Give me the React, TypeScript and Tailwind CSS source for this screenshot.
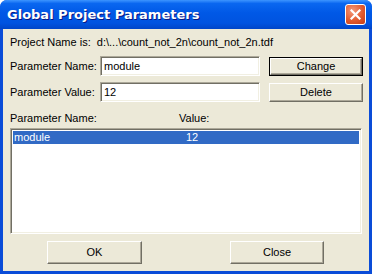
import React from 'react';

const font = { fontFamily: '"Liberation Sans", Arial, sans-serif' };

function Sunken({ className = '', children }: { className?: string; children?: React.ReactNode }) {
  return (
    <div
      className={`border border-t-[#ACA899] border-l-[#ACA899] border-r-white border-b-white shadow-[inset_1px_1px_0_#716F64,inset_-1px_-1px_0_#F1EFE2] bg-white ${className}`}
    >
      {children}
    </div>
  );
}

function Button({ label, isDefault = false, className = '' }: { label: string; isDefault?: boolean; className?: string }) {
  return (
    <div className={`${isDefault ? 'border border-black' : ''} ${className}`}>
      <div className="h-full w-full flex items-center justify-center bg-[#ECE9D8] border border-t-white border-l-white border-r-[#716F64] border-b-[#716F64] shadow-[inset_-1px_-1px_0_#ACA899] text-[11px] text-black">
        {label}
      </div>
    </div>
  );
}

export default function App() {
  return (
    <div className="w-[372px] h-[274px] bg-[#0A4CD8] rounded-t-[7px] flex flex-col overflow-hidden" style={font}>
      {/* 타이틀바 */}
      <div className="h-[29px] shrink-0 flex items-center pl-[7px] pr-[6px] bg-[linear-gradient(180deg,#3D95FF_0%,#0A67F0_12%,#0058E6_45%,#0053E0_80%,#0045C8_100%)]">
        <span
          className="text-white font-bold text-[13px] flex-1 [text-shadow:1px_1px_0_#0A1883]"
          style={{ fontFamily: '"DejaVu Sans", "Liberation Sans", sans-serif' }}
        >
          Global Project Parameters
        </span>
        <div className="w-[21px] h-[21px] rounded-[3px] border border-white bg-[radial-gradient(circle_at_35%_30%,#F49A7C_0%,#E25A2E_55%,#C53B13_100%)] flex items-center justify-center">
          <svg width="11" height="11" viewBox="0 0 11 11">
            <path d="M1.5 1.5 L9.5 9.5 M9.5 1.5 L1.5 9.5" stroke="white" strokeWidth="2.2" strokeLinecap="square" />
          </svg>
        </div>
      </div>

      {/* 본문 */}
      <div className="flex-1 mx-[3px] mb-[3px] bg-[#ECE9D8] pl-[7px] pr-[6px] flex flex-col text-[11px] text-black">
        <div className="mt-[7px] h-[13px] leading-[13px] whitespace-pre">Project Name is:  d:\...\count_not_2n\count_not_2n.tdf</div>

        <div className="mt-[7px] flex items-center h-[20px]">
          <div className="w-[90px]">Parameter Name:</div>
          <Sunken className="w-[160px] h-[20px] flex items-center pl-[3px]">module</Sunken>
          <Button label="Change" isDefault className="ml-[9px] w-[94px] h-[19px]" />
        </div>

        <div className="mt-[6px] flex items-center h-[20px]">
          <div className="w-[90px]">Parameter Value:</div>
          <Sunken className="w-[160px] h-[20px] flex items-center pl-[3px]">12</Sunken>
          <Button label="Delete" className="ml-[9px] w-[94px] h-[19px]" />
        </div>

        <div className="mt-[10px] flex h-[13px] leading-[13px]">
          <div className="w-[169px]">Parameter Name:</div>
          <div>Value:</div>
        </div>

        <Sunken className="mt-[3px] w-[352px] h-[106px] p-[2px]">
          <div className="h-[13px] leading-[13px] flex bg-[#316AC5] text-white">
            <div className="w-[173px] pl-[1px]">module</div>
            <div>12</div>
          </div>
        </Sunken>

        <div className="mt-[7px] flex">
          <Button label="OK" className="ml-[37px] w-[95px] h-[23px]" />
          <Button label="Close" className="ml-[88px] w-[94px] h-[23px]" />
        </div>
      </div>
    </div>
  );
}
